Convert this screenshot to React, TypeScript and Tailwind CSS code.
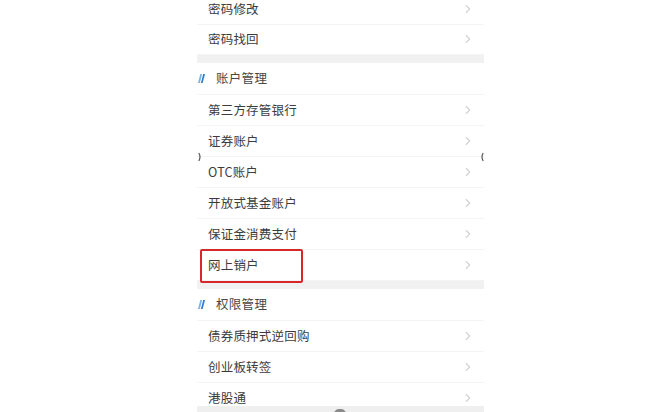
import React from "react";

type Row = { label: string; marked?: boolean };

const topRows: Row[] = [{ label: "密码修改" }, { label: "密码找回" }];
const accountRows: Row[] = [
  { label: "第三方存管银行" },
  { label: "证券账户" },
  { label: "OTC账户" },
  { label: "开放式基金账户" },
  { label: "保证金消费支付" },
  { label: "网上销户", marked: true },
];
const permRows: Row[] = [
  { label: "债券质押式逆回购" },
  { label: "创业板转签" },
  { label: "港股通" },
];

function Chevron() {
  return (
    <svg width="6" height="10" viewBox="0 0 6 10" fill="none">
      <path d="M1.2 1.5l3.5 3.5-3.5 3.5" stroke="#d2d2d2" strokeWidth="1.1" strokeLinecap="round" strokeLinejoin="round" />
    </svg>
  );
}

function SectionMark() {
  return (
    <svg width="7" height="9" viewBox="0 0 7 9">
      <path d="M2.3 0h1.8L1.8 9H0z" fill="#7fb0e0" />
      <path d="M5.2 0H7L4.7 9H2.9z" fill="#2f7fcf" />
    </svg>
  );
}

function ListRow({ row, h = "h-[31px]" }: { row: Row; h?: string }) {
  return (
    <div className={`relative flex ${h} shrink-0 items-center justify-between border-b border-[#f4f4f4] bg-white pl-[11px] pr-[13px]`}>
      <span className="text-[12.5px] leading-none tracking-[0.2px] text-[#3c3c3c]">{row.label}</span>
      <Chevron />
      {row.marked && (
        <div className="absolute -top-[1px] left-[3px] z-10 h-[34px] w-[103px] rounded-[2px] border-[2.5px] border-[#d8262d]" />
      )}
    </div>
  );
}

function SectionHeader({ title }: { title: string }) {
  return (
    <div className="flex h-[32px] shrink-0 items-center gap-[11px] border-b border-[#f4f4f4] bg-white pl-[1px]">
      <SectionMark />
      <span className="text-[12.5px] leading-none tracking-[0.3px] text-[#474747]">{title}</span>
    </div>
  );
}

function Gap() {
  return <div className="h-[8px] shrink-0 bg-[#f1f1f1]" />;
}

export default function App() {
  return (
    <div className="relative h-[412px] w-[655px] overflow-hidden bg-white font-['Noto_Sans_CJK_SC','Noto_Sans',sans-serif]">
      <div className="relative ml-[197px] flex h-[412px] w-[287px] flex-col overflow-hidden">
        <div className="-mt-[6px] flex flex-col">
          {topRows.map((r) => (
            <ListRow key={r.label} row={r} h="h-[30.5px]" />
          ))}
        </div>
        <Gap />
        <SectionHeader title="账户管理" />
        {accountRows.map((r) => (
          <ListRow key={r.label} row={r} />
        ))}
        <Gap />
        <SectionHeader title="权限管理" />
        {permRows.map((r) => (
          <ListRow key={r.label} row={r} />
        ))}
        <div className="absolute bottom-0 left-0 right-0 h-[6px] bg-[#efefef]">
          <div className="absolute left-[137px] top-[3px] h-[5px] w-[12px] rounded-t-full bg-[#8a8a8a]" />
        </div>
      </div>
      <svg className="absolute left-[198px] top-[152px]" width="4" height="10" viewBox="0 0 4 10">
        <path d="M0.8 1q2.4 4 0 8" stroke="#555" strokeWidth="1.2" fill="none" />
      </svg>
      <svg className="absolute left-[480px] top-[152px]" width="4" height="10" viewBox="0 0 4 10">
        <path d="M3.2 1q-2.4 4 0 8" stroke="#555" strokeWidth="1.2" fill="none" />
      </svg>
    </div>
  );
}
